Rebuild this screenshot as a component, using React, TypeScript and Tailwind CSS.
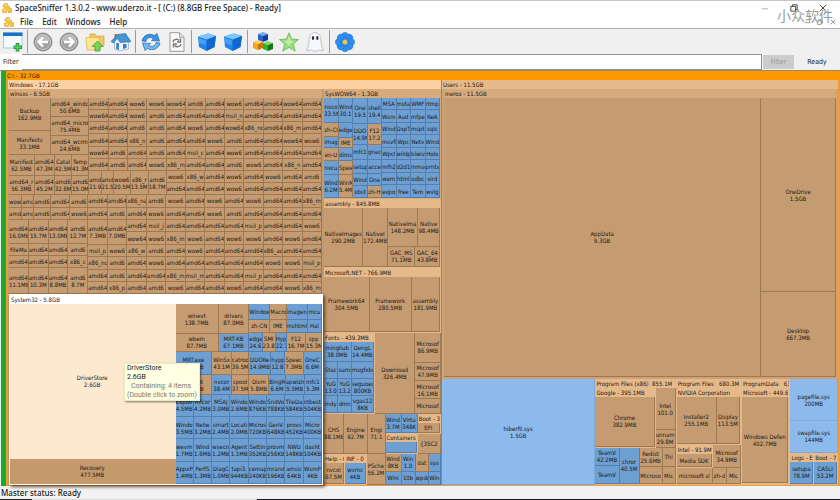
import type { ReactNode } from 'react'

type Kind = 'dir' | 'file' | 'system' | 'hover' | 'shade'

type TreeNode = {
    weight: number
    name?: string
    size?: string
    kind?: Kind
    header?: string
    tone?: string
    flow?: 'row' | 'col'
    children?: TreeNode[]
}

const cellStyles: Record<Kind, string> = {
    dir: 'bg-[#c59c71] border-[#9c7853]',
    file: 'bg-[#6d9fd3] border-[#527eb0]',
    system: 'bg-[#8dbaec] border-[#7fa9d8]',
    hover: 'bg-[#fde9d0] border-[#fde9d0]',
    shade: 'bg-[#c49a6c] border-[#c49a6c]',
}

const d = (weight: number, name: string, size?: string): TreeNode => ({ weight, name, size, kind: 'dir' })
const f = (weight: number, name: string, size?: string): TreeNode => ({ weight, name, size, kind: 'file' })
const s = (weight: number, name: string, size?: string): TreeNode => ({ weight, name, size, kind: 'system' })
const row = (weight: number, ...children: TreeNode[]): TreeNode => ({ weight, flow: 'row', children })
const col = (weight: number, ...children: TreeNode[]): TreeNode => ({ weight, flow: 'col', children })
const box = (weight: number, header: string, tone: string, ...children: TreeNode[]): TreeNode => ({
    weight,
    header,
    tone,
    flow: 'col',
    children,
})

// One row of equal cells, names separated by spaces, "name|size" for the bigger ones
const line = (names: string, kind: Kind = 'dir', weight = 1): TreeNode => ({
    weight,
    flow: 'row',
    children: names.split(' ').map((item) => {
        const [name, size] = item.split('|')
        return { weight: 1, name, size, kind }
    }),
})

const LIGHT = 'bg-[#e6b98b]'
const MID = 'bg-[#d6aa7d]'

const winsxs = [
    row(
        97,
        col(
            80,
            row(
                57,
                col(42, d(33, 'Backup', '162.9MB'), d(24, 'Manifests', '33.1MB')),
                col(38, d(19, 'amd64_windc', '50.6MB'), d(19, 'amd64_micro', '75.4MB'), d(19, 'amd64_wcrm', '24.6MB')),
            ),
            row(21, d(26, 'Manifest', '62.5MB'), d(20, 'amd64', '47.3M'), d(17, 'Catal', '42.5M'), d(17, 'Temp', '41.3M')),
            row(19, d(26, 'amd64_r', '56.3MB'), d(20, 'amd64', '45.2M'), d(17, 'amd6', '32.6M'), d(17, 'amd6', '15.0M')),
        ),
        col(
            232,
            line('amd64_ amd64 wow6 wow6 wow64 amd6 amd64 wow6 amd64 amd64 wow64 amd64'),
            line('wow64 amd64 wow6 amd6 amd64 amd64 amd64 msil_n amd64 amd64 amd64 amd64'),
            line('amd64_ amd64 amd6 amd6 amd64 wow6 amd64 wow64 x86_nc amd64 x86_m amd64'),
            line('amd64_ amd64 x86_n amd6 amd64 amd64 wow6 amd6 amd64 amd64 wow64 wow6'),
            line('wow64_ amd6 amd64 amd6 amd64 msil_c amd64 wow6 amd64 amd64 amd64 amd64'),
            line('amd64_ amd6 amd64 wow6 x86_m amd64 amd64 amd6 wow6 amd64 x86_n amd64'),
            row(
                2,
                row(
                    77,
                    d(12, 'amd', '21.9'),
                    d(12, 'amd', '21.5'),
                    d(17, 'wow6', '20.5M'),
                    d(18, 'x86_r', '13.5M'),
                    d(18, 'amd6', '18.7M'),
                ),
                col(155, line('wow6 x86_w amd64 wow6 amd64 wow6 amd64 amd6'), line('amd64 amd64 amd64 wow6 amd64 amd64 amd64 amd64')),
            ),
        ),
    ),
    row(
        99,
        col(
            79,
            row(13, d(13, 'wow'), d(11, 'amd'), d(18, 'amd6'), d(19, 'amd64'), d(18, 'amd6')),
            row(12, d(13, 'amd'), d(11, 'amd'), d(18, 'amd6'), d(19, 'amd64'), d(18, 'wow6')),
            line('amd64|16.0MB amd64|15.7M amd64|13.0MB amd6|12.7M', 'dir', 24),
            line('FileMa amd64 amd64_ amd6', 'dir', 12),
            line('amd64 amd64 amd64_ x86_c', 'dir', 12),
            line('amd64|11.1MB amd64|10.3M amd64|8.8MB amd6|8.7M', 'dir', 26),
        ),
        col(
            39,
            line('amd64 amd64'),
            line('amd64 amd6'),
            line('amd64|7.3MB amd64|7.0MB', 'dir', 2),
            line('msil_p wow6'),
            line('x86_nc amd6'),
            line('amd64 amd6'),
            line('amd64 x86_p'),
        ),
        col(
            194,
            line('x86_na amd6 wow6 amd64 wow6 amd64 wow6 amd64 amd64 x86_m'),
            line('amd64 wow6 amd64 amd64 wow6 amd6 amd64 amd64 amd64 amd64'),
            line('amd64 msil_j amd64 amd64 amd64 amd64 msil_p amd64 amd64 wow6'),
            line('wow64 wow6 x86_m wow6 amd64 wow6 wow6 amd64 wow6 amd64'),
            line('x86_w amd6 amd64 wow6 amd64 amd64 amd64 x86_ac amd64 amd64'),
            line('amd64 wow6 amd64 amd64 amd64 amd64 amd64 wow6 wow6 msil_p'),
            line('amd64 amd64 x86_m msil_m amd64 amd64 msil_p amd64 amd64 amd64'),
            line('amd64 amd6 wow6 amd64 amd64 wow6 amd64 amd64 wow6 x86_m'),
        ),
    ),
]

const system32 = [
    row(
        89,
        col(
            73,
            row(29, d(43, 'winevt', '138.7MB'), d(30, 'drivers', '87.0MB')),
            row(18, d(43, 'wbem', '87.7MB'), f(30, 'MRT-KB', '67.1MB')),
            row(23, f(37, 'MRT.exe', '80.1MB'), d(19, 'WinSx', '43.1M'), d(17, 'catroo', '39.5M')),
            row(19, d(37, 'catroot', '44.2MB'), f(19, 'nvcor', '38.4M'), d(17, 'spool', '37.5M')),
        ),
        col(
            72,
            row(15, f(21, 'Window'), d(16, 'Macro'), f(21, 'imagen'), f(14, 'mcu')),
            row(13, d(21, 'zh-CN'), d(16, 'IME'), f(21, 'mshtml'), f(14, 'Hal')),
            row(19, f(13, 'edge', '24.6'), d(13, 'SMI', '23.8'), f(11, 'Hyp', '22.7'), d(19, 'F12', '16.7M'), d(16, 'spp', '15.3M')),
            row(23, f(22, 'DDORe', '14.9MB'), f(13, 'hypp', '12.8'), d(19, 'Speec', '7.3MB'), f(18, 'OneC', '6.6M')),
            row(19, d(20, 'Dism', '5.8MB'), f(16, 'BingM', '6.6M'), f(19, 'apwizin', '5.5MB'), f(17, 'mfc1', '5.3M')),
        ),
    ),
    line('Explor|4.5MB mfcor|4.2MB MSAJ|3.0MB Windo|2.6MB Windo|876KB SndVo|788KB TileDa|584KB ntbest|504KB', 'file', 22),
    line('Windo|3.5MB Netw|3.2MB smart|2.4MB Locati|2.0MB Micros|720KB GenV|648KB provs|452KB Micro|400KB', 'file', 22),
    line('wevm|1.7MB Wind|1.6MB wsecn|1.2MB Agent|1.1MB Settin|352KB provm|256KB NWU|148KB dasht|104KB', 'file', 22),
    line('AppxP|1.4MB PerfS|1.3MB DiagC|1.0MB tapi3.|944KB cemap|240KB mrand|196KB amsic|64KB WsmP|4KB', 'file', 22),
]

const syswow = row(
    101,
    row(
        58,
        col(15, f(26, 'nvco', '33.5M'), d(13, 'zh-CI'), f(11, 'imag'), d(13, 'en-U'), f(14, 'nvcu'), f(23, 'Wind', '6.2M')),
        col(14, f(26, 'Wind', '30.1'), f(14, 'edge'), d(10, 'IME'), f(13, 'dims'), d(14, 'Spee'), d(23, 'WinM', '5.4M')),
        col(15, f(27, 'One', '19.5'), f(21, 'DDO', '14.9M'), f(15, 'mfc1'), f(14, 'setup'), f(12, 'Wind'), f(12, 'xbst')),
        col(14, f(27, 'shell', '19.4'), d(21, 'F12', '17.2'), f(15, 'gnac'), f(14, 'acce'), f(12, 'One'), d(12, 'zh-H')),
    ),
    col(
        58,
        line('MSA msta WMF rtmp', 'file'),
        line('Wsm Aud mfpe ReA', 'file'),
        line('Wind DxpT mspt sqlc', 'file'),
        line('msvfi Wpc Netv Wind', 'file'),
        line('Wpcl wildp blwiv Holo', 'file'),
        line('mfh2 d2d1 mmse prntv', 'file'),
        line('wem html odbc vird', 'file'),
        line('expo free Tem wvlg', 'file'),
    ),
)

const windowsRight = [
    box(110, 'SysWOW64 - 1.3GB', MID, syswow),
    box(
        69,
        'assembly - 845.8MB',
        LIGHT,
        row(
            60,
            d(39, 'NativeImages', '290.2MB'),
            d(24, 'NativeI', '172.4MB'),
            col(53, row(38, d(31, 'NativeIma', '148.2MB'), d(22, 'Native', '98.4MB')), row(20, d(28, 'GAC_MS', '71.1MB'), d(25, 'GAC_64', '43.8MB'))),
        ),
    ),
    box(64, 'Microsoft.NET - 766.9MB', LIGHT, row(54, d(46, 'Framework64', '304.5MB'), d(42, 'Framework', '280.5MB'), d(28, 'assembly', '181.9MB'))),
    row(
        82,
        box(
            51,
            'Fonts - 439.3MB',
            LIGHT,
            row(20, f(27, 'mingliub', '38.0MB'), f(22, 'DengL', '14.4MB')),
            row(17, f(14, 'Stac'), f(13, 'sums'), f(22, 'msgfxbd')),
            row(17, f(14, 'YuG', '13.0'), f(13, 'YuG', '13.2'), f(22, 'seguoeui', '800KB')),
            row(17, f(14, 'mdy'), f(13, 'dmn'), f(22, 'vgas12', '8KB')),
        ),
        d(40, 'Download', '326.4MB'),
        col(26, d(30, 'Microsof', '86.9MB'), d(18, 'Microsof', '47.9MB'), d(18, 'Microsof', '16.1MB'), d(14, 'Microsof')),
    ),
    row(
        72,
        col(
            61,
            row(40, d(20, 'CHS', '88.1MB'), d(24, 'Engine', '92.7M'), d(17, 'Engi', '71.1')),
            row(
                31,
                box(21, 'Help - 0', LIGHT, d(1, 'nvcol', '67.5M')),
                box(22, 'INF - 0', LIGHT, f(1, 'wvmc', '4KB')),
                d(18, 'PSche', '56.2M'),
            ),
        ),
        col(
            55,
            row(
                40,
                col(32, row(20, f(16, 'Wind', '3.7M'), f(16, 'Virtu', '348K')), box(20, 'Containers', LIGHT, f(1, ''))),
                col(23, box(20, 'Boot - 3', LIGHT, d(1, 'EFI')), d(20, '{35C2')),
            ),
            row(18, d(16, 'Wind', '8KB'), f(14, 'Win', '1.0'), d(13, 'dat'), f(12, 'sys')),
            row(13, f(16, 'Wini'), f(14, '10b'), f(13, 'wpdc'), f(12, 'Win')),
        ),
    ),
]

const programs = [
    s(154, 'hiberfil.sys', '1.5GB'),
    box(
        81,
        'Program Files (x86)  855.1M',
        LIGHT,
        row(
            59,
            box(59, 'Google - 395.1MB', LIGHT, d(1, 'Chrome', '382.9MB')),
            col(20, d(42, 'Intel', '101.0'), d(17, 'unnam', '29.8M')),
        ),
        row(
            36,
            col(24, f(1, 'TeamV', '42.2MB'), f(1, 'TeamV')),
            f(19, 'chror', '40.5M'),
            col(23, d(19, 'Redist', '25.6MB'), d(16, 'Microso')),
            col(13, d(19, 'Thi'), d(16, 'Mic')),
        ),
    ),
    box(
        65,
        'Program Files   680.3M',
        LIGHT,
        box(56, 'NVIDIA Corporation', LIGHT, row(1, d(39, 'Installer2', '255.1MB'), d(22, 'Display', '113.5M'))),
        row(23, box(35, 'Intel - 91.9M', LIGHT, d(1, 'Media SDK')), d(26, 'Microsof', '34.9MB')),
        row(16, d(35, 'microsoft sl'), d(13, 'zh-d'), d(13, 'Mic')),
    ),
    box(48, 'ProgramData   63', LIGHT, box(1, 'Microsoft - 449.6', LIGHT, d(1, 'Windows Defen', '402.7MB'))),
    col(
        48,
        s(42, 'pagefile.sys', '200MB'),
        s(31, 'swapfile.sys', '144MB'),
        row(33, box(24, 'Logs - E', LIGHT, f(1, 'setupa', '78.9M')), box(24, 'Boot - 7', LIGHT, f(1, 'CASLI', '53.2M'))),
    ),
]

function Header({ text, tone }: { text: string; tone: string }) {
    return <div className={`h-[9px] shrink-0 overflow-hidden whitespace-pre pl-px leading-[9px] ${tone}`}>{text}</div>
}

function Block({ node }: { node: TreeNode }) {
    if (!node.children) {
        return (
            <div
                className={`flex min-h-0 min-w-0 basis-0 flex-col justify-center overflow-hidden whitespace-nowrap border-r border-b text-center leading-[7px] ${cellStyles[node.kind ?? 'dir']}`}
                style={{ flexGrow: node.weight }}
            >
                <div>{node.name}</div>
                {node.size && <div>{node.size}</div>}
            </div>
        )
    }
    return (
        <div
            className={`flex min-h-0 min-w-0 basis-0 ${node.flow === 'row' ? 'flex-row' : 'flex-col'} ${node.header ? `pr-px pb-px ${node.tone}` : ''}`}
            style={{ flexGrow: node.weight }}
        >
            {node.header && <Header text={node.header} tone={node.tone ?? LIGHT} />}
            {node.children.map((child, i) => (
                <Block key={i} node={child} />
            ))}
        </div>
    )
}

function Area({ nodes, flow = 'col' }: { nodes: TreeNode[]; flow?: 'row' | 'col' }) {
    return (
        <div className={`flex min-h-0 min-w-0 flex-1 ${flow === 'row' ? 'flex-row' : 'flex-col'}`}>
            {nodes.map((node, i) => (
                <Block key={i} node={node} />
            ))}
        </div>
    )
}

function Icon({ children, size = 'size-5' }: { children: ReactNode; size?: string }) {
    return (
        <svg viewBox="0 0 20 20" className={size} aria-hidden="true">
            {children}
        </svg>
    )
}

function AppIcon() {
    return (
        <Icon size="size-[10px]">
            <path d="M5 1h6v5h4v5h4v8h-7v-5H9v5H1v-7h4V8H2V4h3z" fill="#f6c33c" stroke="#d9951c" />
            <path d="M7 3h3v3H7zM4 13h3v3H4z" fill="#fff0a8" />
        </Icon>
    )
}

function ArrowCircle({ back }: { back?: boolean }) {
    return (
        <Icon>
            <circle cx="10" cy="10" r="9" fill="#8f8f8f" stroke="#7d7d7d" strokeWidth=".8" />
            <circle cx="10" cy="10" r="7.6" fill="#a2a2a2" stroke="#d4d4d4" strokeWidth=".8" />
            <path d="M3 9a7 7 0 0 1 14 0c-4 1.500-10 1.500-14 0z" fill="#bdbdbd" />
            <path
                d={back ? 'M15 10H6m4-4.500L5.500 10l4.500 4.500' : 'M5 10h9m-4-4.500L14.500 10 10 14.500'}
                fill="none"
                stroke="#fff"
                strokeWidth="2.400"
            />
        </Icon>
    )
}

function CubeShape() {
    return (
        <Icon>
            <path d="M1 4.500 11 1.500l8 2.500-1.500 11L9.500 19 2 15z" fill="#1f86ea" />
            <path d="M1 4.500 11 1.500l8 2.500-9 3.500z" fill="#7cc6ff" />
            <path d="M10 7.500 19 4l-1.500 11-8 4z" fill="#1267cf" />
            <path d="M2 6l7 2.500-.3 5C6 12 4 11.500 2.500 11.500z" fill="#46a0f6" />
        </Icon>
    )
}

function MiniCube({ x, y, colors }: { x: number; y: number; colors: string[] }) {
    return (
        <g transform={`translate(${x} ${y})`}>
            <path d="M0 2 5 0l5 2-5 2z" fill={colors[0]} />
            <path d="M0 2l5 2v6L0 8z" fill={colors[1]} />
            <path d="M10 2 5 4v6l5-2z" fill={colors[2]} />
        </g>
    )
}

const toolGroups: { label: string; icon: ReactNode }[][] = [
    [
        {
            label: 'New view',
            icon: (
                <Icon>
                    <rect x=".5" y="1" width="18.500" height="15" fill="#f4fbff" stroke="#a5c8e4" />
                    <path d="M0 .5h19.500V4H0z" fill="#1573c8" />
                    <path d="M14.500 11v8.500M10.500 15.200H19" stroke="#1f9e34" strokeWidth="3.600" />
                    <path d="M14.500 12v6.500M11.500 15.200H18" stroke="#57d065" strokeWidth="1.500" />
                </Icon>
            ),
        },
    ],
    [
        { label: 'Back', icon: <ArrowCircle back /> },
        { label: 'Forward', icon: <ArrowCircle /> },
        {
            label: 'Up one level',
            icon: (
                <Icon>
                    <path d="M5 2h5l1 2h8v10H5z" fill="#f0cb62" stroke="#cfa040" strokeWidth=".7" />
                    <path d="M1 5.500h13l1 12.500H2z" fill="#ffe596" stroke="#dcb04a" strokeWidth=".7" />
                    <path d="M12.500 9 18 14.500h-3V19h-5v-4.500H7z" fill="#74d658" stroke="#3d9a3a" strokeWidth=".8" />
                </Icon>
            ),
        },
        {
            label: 'Home',
            icon: (
                <Icon>
                    <path d="M3.500 8.500 10 5l7.500 3.500V17L9 19l-5.500-2z" fill="#eef5fb" stroke="#86a5c0" strokeWidth=".7" />
                    <path d="M3.500 2H6v4H3.500z" fill="#b9685a" />
                    <path d="M0 9.500 6.500 2.500l8-1 5.500 8-2.500.5L9 10.500 6.500 6 2.500 11z" fill="#4796d4" stroke="#2a6aa6" strokeWidth=".6" />
                    <path d="M5.200 11H8v7l-2.800-1z" fill="#3d87c6" />
                    <path d="M12 12h3.500v4L12 17z" fill="#2f7fd0" />
                </Icon>
            ),
        },
    ],
    [
        {
            label: 'Refresh',
            icon: (
                <Icon>
                    <path d="M1 9C2 3.500 8 .5 13.500 3.500L16 1.500l2.500 7.500-8-.5 2-2C9 4.500 5.500 6 5 9.500z" fill="#3a94e2" stroke="#1c66b4" strokeWidth=".7" />
                    <path d="M19 11c-1 5.500-7 8.500-12.500 5.500L4 18.500 1.500 11l8 .5-2 2C11 15.500 14.500 14 15 10.500z" fill="#6fb9f2" stroke="#1c66b4" strokeWidth=".7" />
                </Icon>
            ),
        },
        {
            label: 'Rescan',
            icon: (
                <Icon>
                    <path d="M3 .7h9.500l4.500 4.500v14.100H3z" fill="#fafafa" stroke="#999" />
                    <path d="M12.500 1v4.500H17" fill="#ddd" stroke="#999" strokeWidth=".8" />
                    <path d="M6 10c.5-3 4.500-3.500 6-1.500m1.500-2V10H10M14 12c-.5 3-4.500 3.500-6 1.500m-1.500 2V12H10" fill="none" stroke="#777" strokeWidth="1.500" />
                </Icon>
            ),
        },
    ],
    [
        { label: 'Less detail', icon: <CubeShape /> },
        { label: 'More detail', icon: <CubeShape /> },
    ],
    [
        {
            label: 'File classes',
            icon: (
                <Icon>
                    <MiniCube x={5} y={0} colors={['#6aa9f2', '#2264cc', '#123f96']} />
                    <MiniCube x={0} y={8} colors={['#ffd266', '#f2a516', '#c87808']} />
                    <MiniCube x={10} y={9} colors={['#7be06b', '#2faf2a', '#137818']} />
                </Icon>
            ),
        },
        {
            label: 'Tag',
            icon: (
                <Icon>
                    <path d="m10 .8 2.700 6.300 6.700.5-5.100 4.500 1.900 7-6.200-3.700-6.200 3.700 1.900-7L.6 7.600l6.700-.5z" fill="#98dd7e" stroke="#6fb862" strokeWidth=".9" />
                    <path d="m10 4 1.500 4.500 4 .4-4 2.600-1.500 3-1.500-3-4-2.600 4-.4z" fill="#bdf0a6" />
                </Icon>
            ),
        },
        {
            label: 'Free space',
            icon: (
                <Icon>
                    <path d="M4 9c0-5 2-8.300 6-8.300S16 4 16 9c0 3 .5 6 2.500 9.500-2.500.8-3-.8-4.500-.5s-2 1.500-4 1.300-2.500-1.600-4-1.300-2 1-4.500.5C3.500 15 4 12 4 9z" fill="#f6f8fd" stroke="#b4bccb" strokeWidth=".9" />
                    <ellipse cx="8" cy="6" rx="1.200" ry="1.900" fill="#333" />
                    <ellipse cx="12.300" cy="6" rx="1.200" ry="1.900" fill="#333" />
                </Icon>
            ),
        },
    ],
    [
        {
            label: 'Configure',
            icon: (
                <Icon>
                    {[0, 45, 90, 135, 180, 225, 270, 315].map((angle) => (
                        <ellipse key={angle} cx="10" cy="4.600" rx="3.600" ry="4.200" fill="#2f8ff0" stroke="#1b72d6" strokeWidth=".5" transform={`rotate(${angle} 10 10)`} />
                    ))}
                    <circle cx="10" cy="10" r="4.800" fill="#2583e6" />
                    <circle cx="10" cy="10" r="2.600" fill="#e9c762" stroke="#8f9a6a" strokeWidth=".6" />
                </Icon>
            ),
        },
    ],
]

function WindowButtons({ small }: { small?: boolean }) {
    const size = small ? 'size-[6px]' : 'size-[8px]'
    const button = 'flex items-center justify-center'
    const stroke = { fill: 'none', stroke: small ? '#666' : '#333', strokeWidth: 2.2 }
    return (
        <div className={`flex ${small ? 'gap-[7px] pr-1' : 'gap-[21px] pr-[13px]'}`}>
            <button aria-label="Minimize" className={button}>
                <Icon size={size}>
                    <path d="M2 12h16" {...stroke} stroke={small ? '#666' : '#aaa'} />
                </Icon>
            </button>
            <button aria-label="Restore" className={button}>
                <Icon size={size}>
                    <path d="M2 6h12v12H2zM6 6V2h12v12h-4" {...stroke} />
                </Icon>
            </button>
            <button aria-label="Close" className={button}>
                <Icon size={size}>
                    <path d="m2 2 16 16M18 2 2 18" {...stroke} />
                </Icon>
            </button>
        </div>
    )
}

export default function App() {
    return (
        <div className="relative flex h-screen flex-col overflow-hidden border-t border-[#c8c8c8] bg-[#f0f0f0] font-['Noto_Sans','Open_Sans',sans-serif] text-[8px] text-[#222]">
            {/* Title bar */}
            <header className="flex h-[14px] shrink-0 items-center bg-white pl-[2px]">
                <AppIcon />
                <h1 className="ml-[3px] flex-1 font-medium">SpaceSniffer 1.3.0.2 - www.uderzo.it - [ (C:) (8.8GB Free Space) - Ready]</h1>
                <WindowButtons />
            </header>

            {/* Menu */}
            <nav className="flex h-[13px] shrink-0 items-center bg-white pl-1 font-medium">
                <AppIcon />
                <div className="ml-1.5 flex flex-1 gap-[9px]">
                    <button>File</button>
                    <button>Edit</button>
                    <button>Windows</button>
                    <button>Help</button>
                </div>
                <WindowButtons small />
            </nav>

            {/* Toolbar */}
            <div className="flex h-[26px] shrink-0 items-center gap-px border-t border-[#b0b0b0]">
                {toolGroups.map((group, i) => (
                    <div key={i} className="flex items-center gap-px">
                        {i > 0 && <span className="mx-px h-[23px] w-px bg-[#9a9a9a]" />}
                        {group.map((tool) => (
                            <button key={tool.label} aria-label={tool.label} className="flex w-[25px] items-center justify-center">
                                {tool.icon}
                            </button>
                        ))}
                    </div>
                ))}
            </div>

            {/* Filter */}
            <form className="flex h-4 shrink-0 items-stretch font-['DejaVu_Sans_Condensed','DejaVu_Sans',sans-serif] text-[7px]">
                <label htmlFor="filter" className="flex w-[22px] items-center bg-white pl-[3px]">
                    Filter
                </label>
                <input id="filter" className="min-w-0 flex-1 border border-l-0 border-[#8f8f8f] bg-white px-1 outline-none" />
                <button type="button" disabled className="my-px ml-px w-[31px] bg-[#cccccc] text-[#999]">
                    Filter
                </button>
                <span className="flex w-[46px] items-center justify-center">Ready</span>
            </form>

            {/* Treemap */}
            <main className="flex min-h-0 flex-1 border-t border-[#9b8663] pl-px font-['DejaVu_Sans_Condensed','DejaVu_Sans',sans-serif] text-[6px] text-[#1c1712]">
                <div className="w-[5px] shrink-0 bg-[#14ad2c]" />
                <div className="flex min-w-0 flex-1 flex-col">
                    <Header text="C:\ - 32.7GB" tone="bg-[#ff9900]" />
                    <div className="flex min-h-0 flex-1 gap-px border-r-2 border-b border-l-2 border-[#f29a3c] bg-[#b37d49]">
                        <section className="flex min-w-0 basis-0 grow-[433] flex-col">
                            <Header text="Windows - 17.1GB" tone="bg-[#fdd0a2]" />
                            <div className="flex min-h-0 flex-1 bg-[#c49a6c] pl-px">
                                <div className="flex min-w-0 basis-0 grow-[314] flex-col">
                                    <section className="flex min-h-0 basis-0 grow-[207] flex-col pr-px">
                                        <Header text="winsxs - 6.5GB" tone={MID} />
                                        <Area nodes={winsxs} />
                                    </section>
                                    <section className="relative z-10 flex min-h-0 basis-0 grow-[190] flex-col bg-white p-px shadow-[2px_2px_3px_rgba(60,30,0,0.7)]">
                                        <Header text="System32 - 5.8GB" tone="bg-white" />
                                        <div className="flex min-h-0 flex-1">
                                            <div className="flex min-w-0 basis-0 grow-[165] flex-col">
                                                <Block node={{ weight: 153, name: 'DriverStore', size: '2.6GB', kind: 'hover' }} />
                                                <Block node={{ weight: 24, name: 'Recovery', size: '477.5MB', kind: 'shade' }} />
                                            </div>
                                            <div className="flex min-w-0 basis-0 grow-[146] flex-col">
                                                <Area nodes={system32} />
                                            </div>
                                        </div>
                                        <div
                                            role="tooltip"
                                            className="absolute top-[69px] left-[115px] border border-[#ecebc0] bg-[#ffffe1] px-0.5 font-['Roboto','Noto_Sans',sans-serif] text-[7px] leading-[9px] whitespace-nowrap shadow-[1px_1px_2px_rgba(0,0,0,0.5)]"
                                        >
                                            <p>DriverStore</p>
                                            <p>2.6GB</p>
                                            <p className="pl-1 text-[#777]">Containing: 4 items</p>
                                            <p className="text-[#777]">(Double click to zoom)</p>
                                        </div>
                                    </section>
                                </div>
                                <div className="flex min-w-0 basis-0 grow-[117] flex-col pl-px">
                                    <Area nodes={windowsRight} />
                                </div>
                            </div>
                        </section>

                        <div className="flex min-w-0 basis-0 grow-[396] flex-col">
                            <section className="flex min-h-0 basis-0 grow-[299] flex-col bg-[#cfa276]">
                                <Header text="Users - 11.5GB" tone={LIGHT} />
                                <div className="flex min-h-0 flex-1 flex-col px-[2px] pb-[2px]">
                                    <Header text="ineroz - 11.5GB" tone={MID} />
                                    <Area
                                        flow="row"
                                        nodes={[d(317, 'AppData', '9.3GB'), col(75, d(196, 'OneDrive', '1.5GB'), d(85, 'Desktop', '667.3MB'))]}
                                    />
                                </div>
                            </section>
                            <section className="flex min-h-0 basis-0 grow-[106]">
                                <Area flow="row" nodes={programs} />
                            </section>
                        </div>
                    </div>
                </div>
            </main>

            {/* Status bar */}
            <footer className="flex h-[14px] shrink-0 flex-col justify-between bg-[#f2f2f2]">
                <p className="pl-px leading-[13px] font-medium">Master status: Ready</p>
                <div className="flex h-px">
                    <span className="w-8 bg-[#222]" />
                    <span className="w-[225px] bg-[#dcdcdc]" />
                    <span className="flex-1 bg-[#191926]" />
                </div>
            </footer>

            <span className="absolute top-[4px] right-[7px] font-['Noto_Sans_CJK_SC',sans-serif] text-[14px] leading-5 text-[#999]">小众软件</span>
        </div>
    )
}
